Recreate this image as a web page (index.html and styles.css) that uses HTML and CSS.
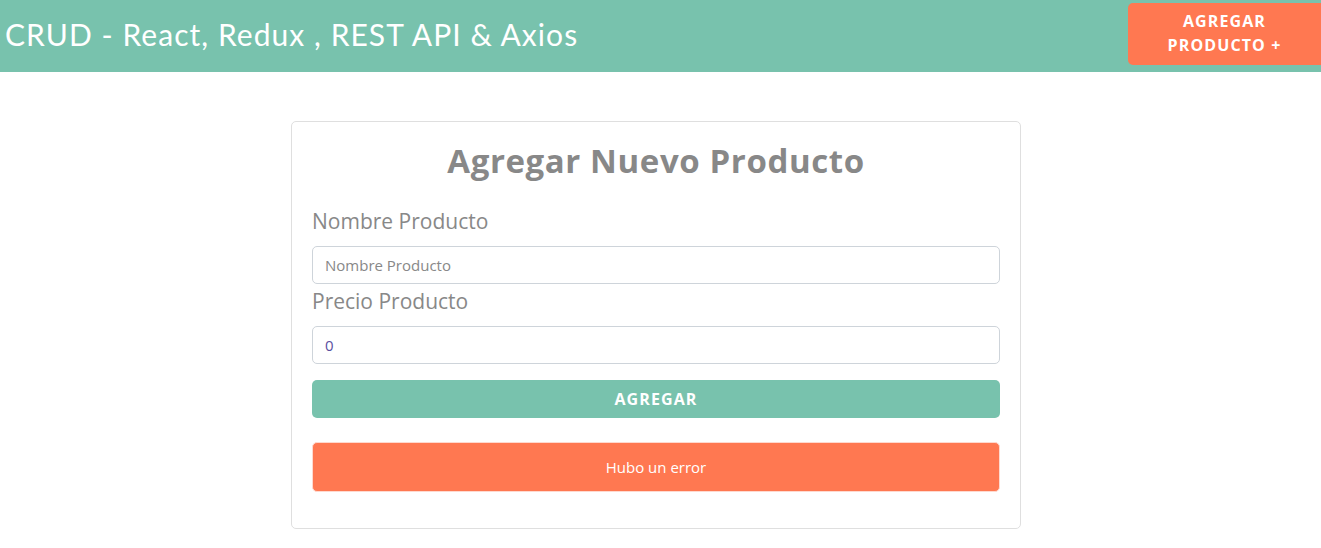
FILE: index.html
```html
<!DOCTYPE html>
<html lang="es">
<head>
<meta charset="utf-8">
<title>CRUD</title>
<link rel="stylesheet" href="styles.css">
</head>
<body>
<header class="navbar">
  <h1 class="brand">CRUD - React, Redux , REST API &amp; Axios</h1>
  <a class="btn-new" href="#">AGREGAR<br>PRODUCTO +</a>
</header>
<main class="page">
  <section class="card">
    <h2 class="card-title">Agregar Nuevo Producto</h2>
    <form class="form">
      <label class="label" for="nombre">Nombre Producto</label>
      <input class="input" id="nombre" type="text" placeholder="Nombre Producto">
      <label class="label" for="precio">Precio Producto</label>
      <input class="input input-num" id="precio" type="text" value="0">
      <button class="btn-submit" type="button">AGREGAR</button>
    </form>
    <div class="alert">Hubo un error</div>
  </section>
</main>
</body>
</html>
```

FILE: styles.css
```css
* { box-sizing: border-box; }
body {
  margin: 0;
  background: #fff;
  font-family: "Open Sans", "Noto Sans", sans-serif;
  color: #888;
}
.navbar {
  height: 72px;
  background: #78c2ad;
  display: flex;
  justify-content: space-between;
  align-items: flex-start;
}
.brand {
  margin: 0;
  padding: 16px 0 0 5px;
  font-family: "Lato", "Open Sans", sans-serif;
  font-weight: 400;
  font-size: 30px;
  letter-spacing: 1.05px;
  color: #fff;
  line-height: 36px;
}
.btn-new {
  margin-top: 3px;
  width: 193px;
  height: 62px;
  background: #ff7851;
  border-radius: 5px 0 0 5px;
  color: #fff;
  text-decoration: none;
  font-family: "Open Sans", sans-serif;
  font-weight: 700;
  font-size: 16px;
  line-height: 24px;
  text-align: center;
  padding-top: 6px;
  letter-spacing: 1.1px;
}
.page {
  display: flex;
  justify-content: center;
  padding: 49px 9px 0 0;
}
.card {
  width: 730px;
  border: 1px solid #dfdfdf;
  border-radius: 5px;
  padding: 20px 20px 36px;
}
.card-title {
  margin: 0 0 26px;
  text-align: center;
  font-family: "Open Sans", sans-serif;
  font-weight: 700;
  font-size: 33px;
  line-height: 38px;
  color: #888;
  letter-spacing: 0.6px;
}
.form {
  display: flex;
  flex-direction: column;
}
.label {
  font-size: 21px;
  line-height: 30px;
  margin-bottom: 10px;
  color: #888;
}
.input {
  height: 38px;
  border: 1px solid #ced4da;
  border-radius: 5px;
  padding: 0 12px;
  font-family: "Open Sans", sans-serif;
  font-size: 15px;
  color: #5a5a5a;
  outline: none;
  margin-bottom: 2px;
}
.input::placeholder { color: #888; }
.input-num { color: #5a4fa0; margin-bottom: 16px; }
.btn-submit {
  height: 38px;
  border: 0;
  border-radius: 5px;
  background: #78c2ad;
  color: #fff;
  font-family: "Open Sans", sans-serif;
  font-weight: 700;
  font-size: 16px;
  letter-spacing: 1.1px;
}
.alert {
  margin-top: 24px;
  height: 50px;
  background: #ff7851;
  border: 1px solid #ffd9cf;
  border-radius: 5px;
  color: #fff;
  font-size: 15px;
  display: flex;
  align-items: center;
  justify-content: center;
}
```
